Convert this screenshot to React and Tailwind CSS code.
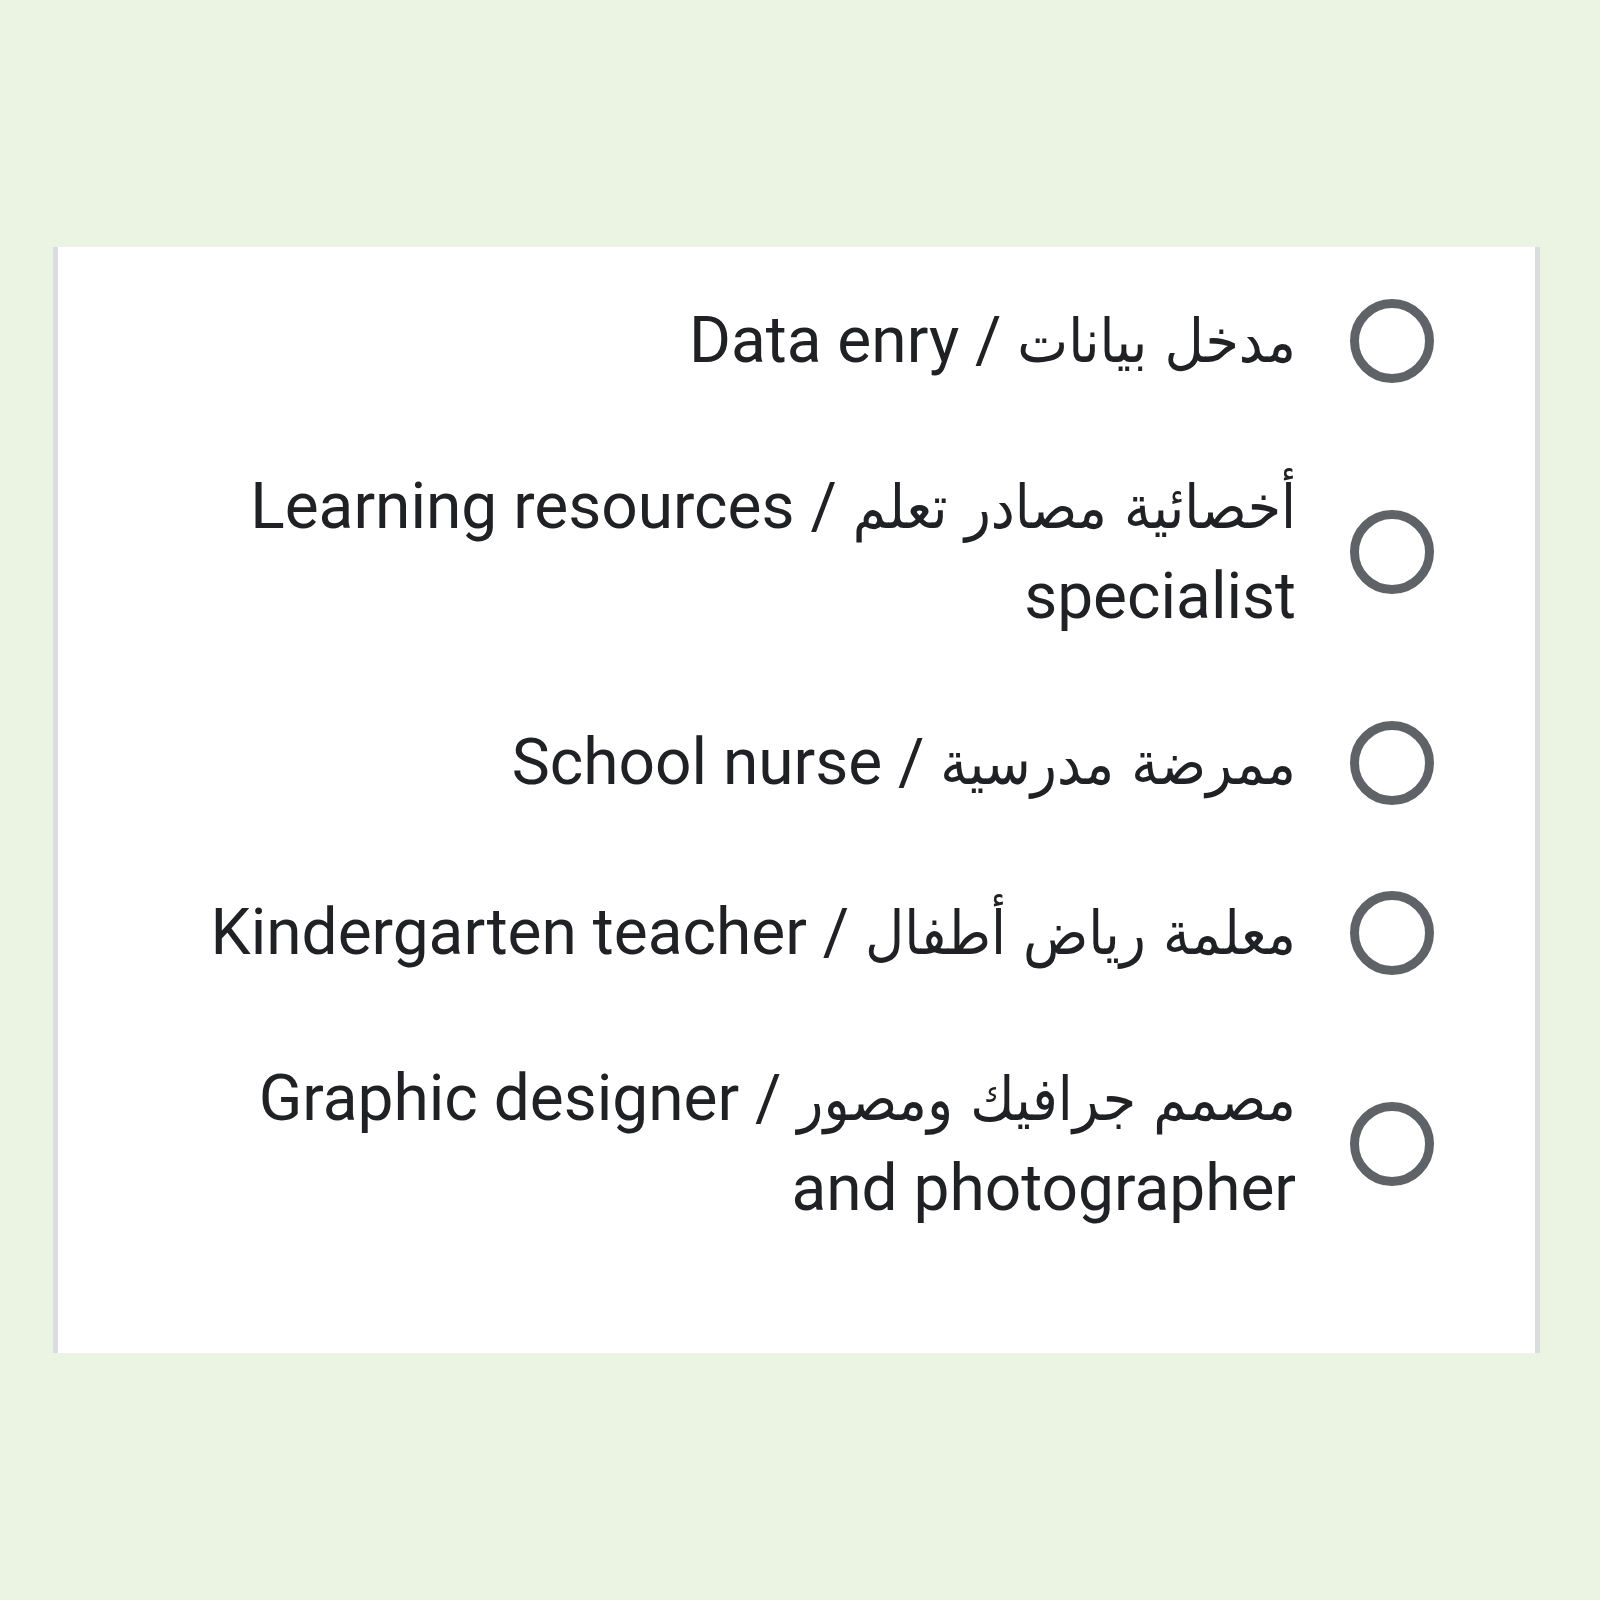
const OPTIONS = [
  { ar: 'مدخل بيانات', en: 'Data enry' },
  { ar: 'أخصائية مصادر تعلم', en: 'Learning resources specialist' },
  { ar: 'ممرضة مدرسية', en: 'School nurse' },
  { ar: 'معلمة رياض أطفال', en: 'Kindergarten teacher' },
  { ar: 'مصمم جرافيك ومصور', en: 'Graphic designer and photographer' },
]

function Radio() {
  return <div className="w-[84px] h-[84px] shrink-0 rounded-full border-[9px] border-[#5f6368]" />
}

export default function App() {
  return (
    <div className="w-full h-[1600px] bg-[#ebf4e3] pt-[247px] pl-[53px] pr-[60px]">
      <div
        dir="rtl"
        className="w-[1487px] h-[1106px] bg-white border-x-[5px] border-[#dadce0] pt-[9px] pr-[101px] pl-[110px]"
      >
        {OPTIONS.map(({ ar, en }) => (
          <div key={en} className="flex items-center gap-[54px] min-h-[170px] py-[36px]">
            <Radio />
            <p className="text-[64px] leading-[90px] text-[#202124] font-['Roboto','DejaVu_Sans',sans-serif]">
              <span className="text-[60px] leading-none font-['DejaVu_Sans_Condensed','DejaVu_Sans',sans-serif]">{ar}</span> / {en}
            </p>
          </div>
        ))}
      </div>
    </div>
  )
}
